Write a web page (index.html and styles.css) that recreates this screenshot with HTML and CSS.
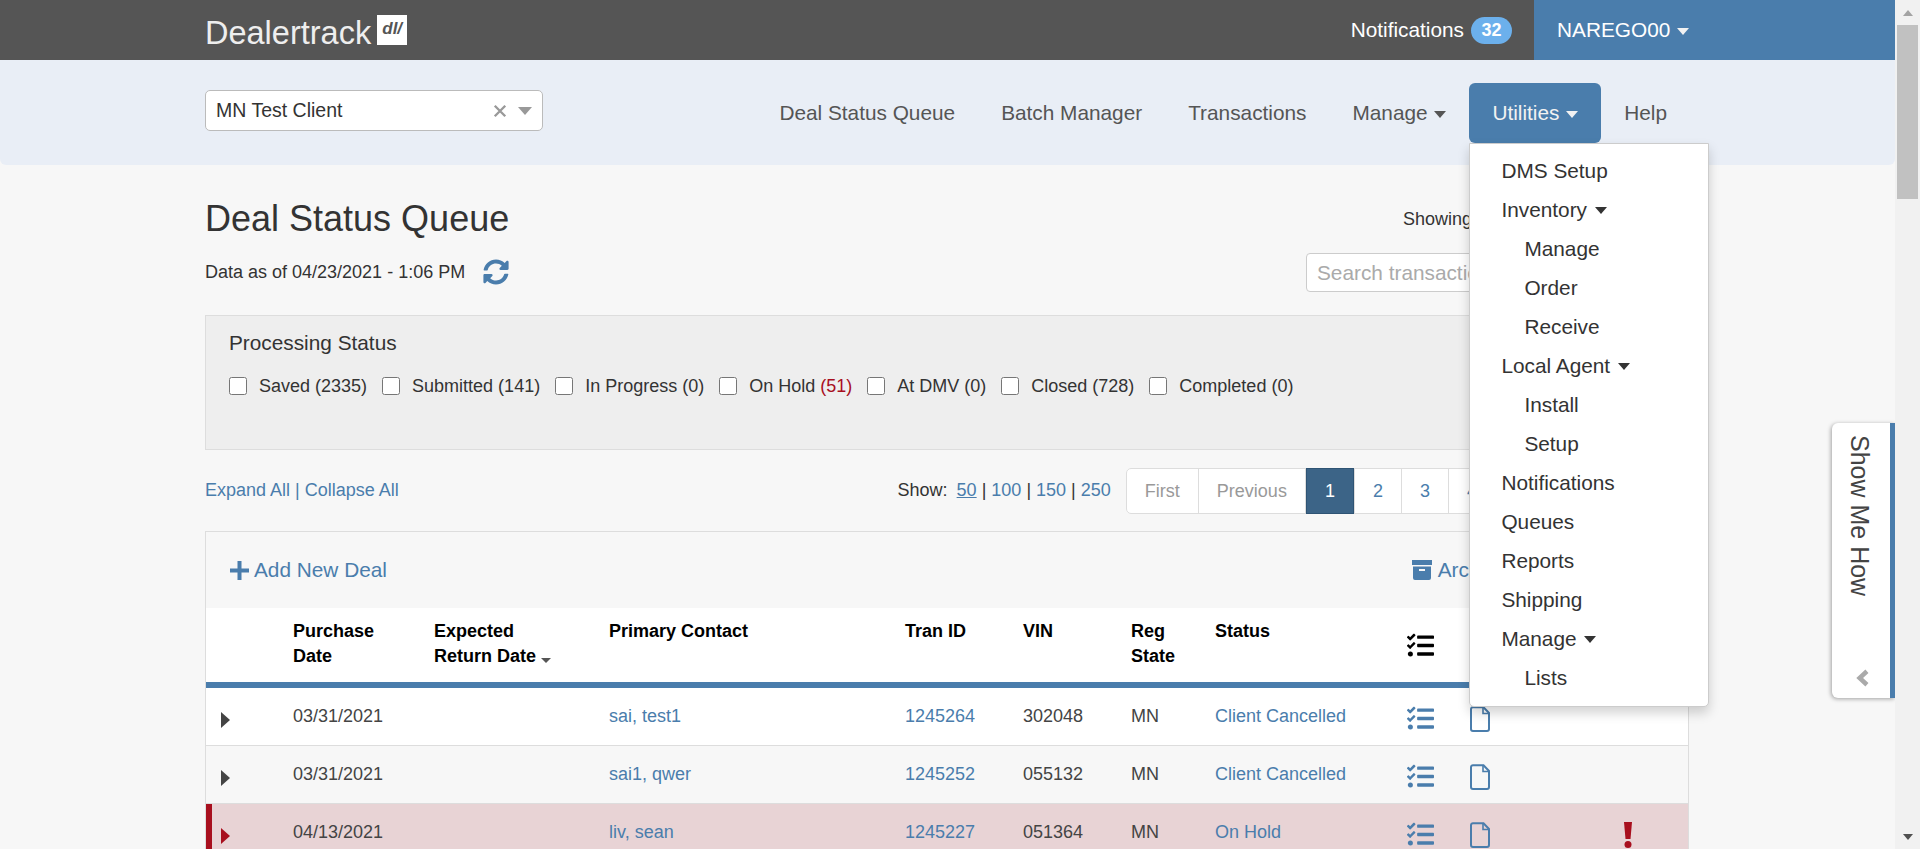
FILE: index.html
```
<!DOCTYPE html>
<html lang="en">
<head>
<meta charset="utf-8">
<title>Deal Status Queue</title>
<link rel="stylesheet" href="styles.css">
</head>
<body>
<svg class="sprite" aria-hidden="true">
  <symbol id="i-tasks" viewBox="0 0 512 512"><path d="M139.61 35.5a12 12 0 0 0-17 0L58.93 98.81l-22.7-22.12a12 12 0 0 0-17 0L3.53 92.41a12 12 0 0 0 0 17l47.59 47.4a12.78 12.78 0 0 0 17.61 0l15.59-15.62L156.52 69a12.09 12.09 0 0 0 .09-17zm0 159.19a12 12 0 0 0-17 0l-63.68 63.72-22.7-22.1a12 12 0 0 0-17 0L3.53 252a12 12 0 0 0 0 17L51 316.5a12.77 12.77 0 0 0 17.6 0l15.7-15.69 72.2-72.22a12 12 0 0 0 .09-16.9zM64 368c-26.49 0-48.59 21.5-48.59 48S37.53 464 64 464a48 48 0 0 0 0-96zm432 16H208a16 16 0 0 0-16 16v32a16 16 0 0 0 16 16h288a16 16 0 0 0 16-16v-32a16 16 0 0 0-16-16zm0-320H208a16 16 0 0 0-16 16v32a16 16 0 0 0 16 16h288a16 16 0 0 0 16-16V80a16 16 0 0 0-16-16zm0 160H208a16 16 0 0 0-16 16v32a16 16 0 0 0 16 16h288a16 16 0 0 0 16-16v-32a16 16 0 0 0-16-16z"/></symbol>
  <symbol id="i-doc" viewBox="0 0 20 26"><path d="M3 1.2h10.5L19 7v16a2 2 0 0 1-2 2H3a2 2 0 0 1-2-2V3.2a2 2 0 0 1 2-2z" fill="none" stroke="currentColor" stroke-width="2"/><path d="M13 1.5V7.5h5.7" fill="none" stroke="currentColor" stroke-width="1.6"/></symbol>
</svg>

<div class="app">
  <main class="page">
    <header class="topbar">
      <a class="logo">
        <span class="logo-text">Dealertrack</span>
        <span class="logo-mark">dl/</span>
      </a>
      <div class="notifications">
        <span>Notifications</span>
        <span class="badge">32</span>
      </div>
      <div class="user">NAREGO00 <i class="caret caret-light"></i></div>
    </header>

    <div class="navband">
      <div class="client-select">
        <span class="client-name">MN Test Client</span>
        <svg class="clear-x" viewBox="0 0 12 12"><path d="M1.5 1.5l9 9M10.500 1.500l-9 9"/></svg>
        <i class="select-caret"></i>
      </div>
      <nav class="mainnav">
        <a class="navitem">Deal Status Queue</a>
        <a class="navitem">Batch Manager</a>
        <a class="navitem">Transactions</a>
        <a class="navitem">Manage <i class="caret"></i></a>
        <div class="navitem active">Utilities <i class="caret caret-light"></i>
          <ul class="dropdown">
            <li>DMS Setup</li>
            <li>Inventory <i class="caret caret-dark"></i></li>
            <li class="sub">Manage</li>
            <li class="sub">Order</li>
            <li class="sub">Receive</li>
            <li>Local Agent <i class="caret caret-dark"></i></li>
            <li class="sub">Install</li>
            <li class="sub">Setup</li>
            <li>Notifications</li>
            <li>Queues</li>
            <li>Reports</li>
            <li>Shipping</li>
            <li>Manage <i class="caret caret-dark"></i></li>
            <li class="sub">Lists</li>
          </ul>
        </div>
        <a class="navitem">Help</a>
      </nav>
    </div>

    <div class="content">
      <section class="title-row">
        <div class="title-left">
          <h1>Deal Status Queue</h1>
          <div class="asof">
            <span>Data as of 04/23/2021 - 1:06 PM</span>
            <svg class="refresh" viewBox="0 0 512 512"><path d="M370.72 133.28C339.458 104.008 298.888 87.962 255.848 88c-77.458.068-144.328 53.178-162.791 126.85-1.344 5.363-6.122 9.15-11.651 9.15H24.103c-7.498 0-13.194-6.807-11.807-14.176C33.933 94.924 134.813 8 256 8c66.448 0 126.791 26.136 171.315 68.685L463.03 40.97C478.149 25.851 504 36.559 504 57.941V192c0 13.255-10.745 24-24 24H345.941c-21.382 0-32.09-25.851-16.971-40.971l41.75-41.749zM32 296h134.059c21.382 0 32.09 25.851 16.971 40.971l-41.75 41.75c31.262 29.273 71.835 45.319 114.876 45.28 77.418-.07 144.315-53.144 162.787-126.849 1.344-5.363 6.122-9.15 11.651-9.15h57.304c7.498 0 13.194 6.807 11.807 14.176C478.067 417.076 377.187 504 256 504c-66.448 0-126.791-26.136-171.315-68.685L48.97 471.03C33.851 486.149 8 475.441 8 454.059V320c0-13.255 10.745-24 24-24z"/></svg>
          </div>
        </div>
        <div class="title-right">
          <div class="showing">Showing</div>
          <input class="search" type="text" placeholder="Search transactions">
        </div>
      </section>

      <section class="status-panel">
        <h2>Processing Status</h2>
        <div class="status-options">
          <label class="opt"><input type="checkbox"><span>Saved (2335)</span></label>
          <label class="opt"><input type="checkbox"><span>Submitted (141)</span></label>
          <label class="opt"><input type="checkbox"><span>In Progress (0)</span></label>
          <label class="opt"><input type="checkbox"><span>On Hold <em class="count-red">(51)</em></span></label>
          <label class="opt"><input type="checkbox"><span>At DMV (0)</span></label>
          <label class="opt"><input type="checkbox"><span>Closed (728)</span></label>
          <label class="opt"><input type="checkbox"><span>Completed (0)</span></label>
        </div>
      </section>

      <div class="pager-row">
        <div class="expand"><a>Expand All</a> | <a>Collapse All</a></div>
        <div class="show">Show: <a class="current">50</a> | <a>100</a> | <a>150</a> | <a>250</a></div>
        <ul class="pagination">
          <li class="off">First</li>
          <li class="off">Previous</li>
          <li class="on">1</li>
          <li>2</li>
          <li>3</li>
          <li>4</li>
          <li>5</li>
          <li>Next</li>
          <li>Last</li>
        </ul>
      </div>

      <section class="deals">
        <div class="deals-bar">
          <a class="add-deal">
            <svg class="plus" viewBox="0 0 19 19"><path d="M7.500 0h4v7.500H19v4h-7.500V19h-4v-7.500H0v-4h7.500z"/></svg>
            Add New Deal
          </a>
          <a class="archive">
            <svg class="archive-icon" viewBox="0 0 20 20"><path d="M0 0h20v5H0zM1 6.500h18V18a2 2 0 0 1-2 2H3a2 2 0 0 1-2-2zM7 9v2h6V9z" fill-rule="evenodd"/></svg>
            Archive
          </a>
        </div>
        <table class="deal-table">
          <colgroup>
            <col class="c-arrow"><col class="c-date"><col class="c-return"><col class="c-contact"><col class="c-tran"><col class="c-vin"><col class="c-reg"><col class="c-status"><col class="c-tasks"><col class="c-doc"><col class="c-flag">
          </colgroup>
          <thead>
            <tr>
              <th></th>
              <th>Purchase<br>Date</th>
              <th>Expected<br>Return Date <i class="caret caret-sort"></i></th>
              <th>Primary Contact</th>
              <th>Tran ID</th>
              <th>VIN</th>
              <th>Reg<br>State</th>
              <th>Status</th>
              <th><svg class="icon-tasks head-icon"><use href="#i-tasks"/></svg></th>
              <th><span class="head-doc"></span></th>
              <th></th>
            </tr>
          </thead>
          <tbody>
            <tr class="row-white">
              <td class="arrow-cell"><i class="arrow"></i></td>
              <td>03/31/2021</td><td></td><td><a>sai, test1</a></td><td><a>1245264</a></td><td>302048</td><td>MN</td><td><a>Client Cancelled</a></td>
              <td><svg class="icon-tasks"><use href="#i-tasks"/></svg></td>
              <td><svg class="icon-doc"><use href="#i-doc"/></svg></td>
              <td></td>
            </tr>
            <tr class="row-grey">
              <td class="arrow-cell"><i class="arrow"></i></td>
              <td>03/31/2021</td><td></td><td><a>sai1, qwer</a></td><td><a>1245252</a></td><td>055132</td><td>MN</td><td><a>Client Cancelled</a></td>
              <td><svg class="icon-tasks"><use href="#i-tasks"/></svg></td>
              <td><svg class="icon-doc"><use href="#i-doc"/></svg></td>
              <td></td>
            </tr>
            <tr class="row-hold">
              <td class="arrow-cell"><i class="arrow"></i></td>
              <td>04/13/2021</td><td></td><td><a>liv, sean</a></td><td><a>1245227</a></td><td>051364</td><td>MN</td><td><a>On Hold</a></td>
              <td><svg class="icon-tasks"><use href="#i-tasks"/></svg></td>
              <td><svg class="icon-doc"><use href="#i-doc"/></svg></td>
              <td><svg class="flag" viewBox="0 0 10 26"><path d="M1 0h8l-1.500 17h-5z"/><circle cx="5" cy="22.500" r="3.500"/></svg></td>
            </tr>
          </tbody>
        </table>
      </section>
    </div>

    <aside class="showme">
      <span class="showme-text">Show Me How</span>
      <svg class="showme-chev" viewBox="0 0 12 16"><path d="M9.500 2L3 8l6.500 6" /></svg>
    </aside>
  </main>

  <div class="scrollbar">
    <div class="sb-btn"><i class="sb-up"></i></div>
    <div class="sb-thumb"></div>
    <div class="sb-btn sb-btn-down"><i class="sb-down"></i></div>
  </div>
</div>
</body>
</html>
```

FILE: styles.css
```
* { box-sizing: border-box; }
html, body { margin: 0; padding: 0; height: 100%; overflow: hidden; }
body { font-family: "Liberation Sans", Arial, sans-serif; font-size: 18px; color: #333; background: #f7f7f7; }
a { color: #4a7dac; text-decoration: none; }
ul { list-style: none; margin: 0; padding: 0; }
.sprite { display: none; }

.app { display: flex; height: 849px; }
.page { position: relative; flex: 1 1 auto; width: 1895px; height: 849px; overflow: hidden; background: #f7f7f7; }

/* Scrollbar */
.scrollbar { flex: 0 0 25px; display: flex; flex-direction: column; background: #f1f1f1; }
.sb-btn { height: 25px; display: flex; align-items: center; justify-content: center; }
.sb-btn-down { margin-top: auto; }
.sb-thumb { height: 174px; margin: 0 2px; background: #c1c1c1; }
.sb-up { width: 0; height: 0; border-left: 5.5px solid transparent; border-right: 5.5px solid transparent; border-bottom: 6px solid #a3a3a3; }
.sb-down { width: 0; height: 0; border-left: 5.5px solid transparent; border-right: 5.5px solid transparent; border-top: 6px solid #505050; }

/* Carets */
.caret { display: inline-block; width: 0; height: 0; margin-left: 1px; vertical-align: 2px; border-left: 6px solid transparent; border-right: 6px solid transparent; border-top: 7px solid #555; }
.caret-light { border-top-color: #f2f2f2; }
.caret-dark { border-top-color: #333; margin-left: 2px; vertical-align: 3px; }
.caret-sort { margin-left: 0; vertical-align: -1px; border-left-width: 5px; border-right-width: 5px; border-top-width: 5px; }

/* Top bar */
.topbar { display: flex; align-items: center; height: 60px; padding-left: 205px; background: #555; color: #fff; font-size: 20.8px; }
.logo { display: flex; align-items: flex-start; height: 30px; }
.logo-text { font-size: 32.5px; line-height: 30px; margin-top: 3px; color: #eee; }
.logo-mark { width: 30px; height: 30px; margin-left: 6px; background: #fff; color: #555; font-size: 17px; font-weight: bold; font-style: italic; line-height: 28px; text-align: center; }
.notifications { display: flex; align-items: center; gap: 7px; margin-left: auto; margin-right: 22px; }
.badge { width: 41px; height: 27px; border-radius: 14px; background: #6cb0ec; font-size: 18px; font-weight: bold; line-height: 27px; text-align: center; }
.user { width: 361px; height: 60px; padding-left: 23px; line-height: 60px; background: #4a7dac; }

/* Nav band */
.navband { display: flex; justify-content: space-between; height: 105px; padding: 0 205px; background: #e9eef6; border-radius: 0 0 6px 6px; position: relative; z-index: 2; }
.client-select { display: flex; align-items: center; width: 338px; height: 41px; margin-top: 30px; padding: 0 10px; background: #fff; border: 1px solid #bbb; border-radius: 5px; }
.client-name { flex: 1; font-size: 19.5px; }
.clear-x { width: 14px; height: 14px; fill: none; stroke: #999; stroke-width: 2; margin-right: 11px; }
.select-caret { width: 0; height: 0; border-left: 7.5px solid transparent; border-right: 7.5px solid transparent; border-top: 8px solid #999; }
.mainnav { display: flex; align-items: flex-start; margin-top: 23px; font-size: 20.8px; }
.navitem { position: relative; height: 60px; padding: 0 23px; line-height: 60px; color: #555; white-space: nowrap; }
.navitem.active { background: #4a7dac; border-radius: 6px; color: #f2f2f2; }
.dropdown { position: absolute; top: 60px; left: 0; width: 240px; padding: 7px 0 9px; background: #fff; border: 1px solid #ccc; border-radius: 0 0 5px 5px; box-shadow: 0 6px 12px rgba(0,0,0,.175); line-height: 39px; color: #333; z-index: 5; }
.dropdown li { padding-left: 31px; }
.dropdown li.sub { padding-left: 54px; }

/* Content */
.content { width: 1689px; padding-left: 205px; }
.title-row { display: flex; justify-content: space-between; height: 150px; padding-top: 34px; }
h1 { margin: 0; font-size: 36px; font-weight: normal; line-height: 40px; color: #333; }
.asof { display: flex; align-items: center; gap: 18px; margin-top: 20px; height: 26px; }
.refresh { width: 26px; height: 26px; fill: #4a7dac; }
.title-right { width: 383px; }
.showing { height: 40px; padding-left: 97px; line-height: 40px; }
.search { display: block; width: 100%; height: 39px; margin-top: 14px; padding: 0 10px; border: 1px solid #ccc; border-radius: 4px; background: #fff; font: 20.8px "Liberation Sans", Arial, sans-serif; }
.search::placeholder { color: #aaa; }

.status-panel { height: 135px; padding: 14px 23px 0; background: #eee; border: 1px solid #ddd; }
h2 { margin: 0; font-size: 20.8px; font-weight: normal; line-height: 26px; color: #333; }
.status-options { display: flex; gap: 15px; height: 28px; margin-top: 16px; }
.opt { display: flex; align-items: center; gap: 12px; }
.opt input { width: 18px; height: 18px; margin: 0; }
.count-red { font-style: normal; color: #a80f1e; }

.pager-row { display: flex; align-items: center; height: 81px; padding-right: 1px; }
.expand { font-size: 18px; color: #4a7dac; }
.show { margin-left: auto; white-space: pre-wrap; color: #333; }
.show a.current { text-decoration: underline; margin-left: 4px; }
.pagination { display: flex; height: 46px; margin-left: 15px; background: #fff; border-radius: 5px; }
.pagination li { margin-left: -1px; padding: 0 18px; line-height: 44px; color: #4a7dac; border: 1px solid #ddd; background: #fff; }
.pagination li:first-child { margin-left: 0; border-radius: 5px 0 0 5px; }
.pagination li.off { color: #999; }
.pagination li.on { margin-left: 0; margin-right: 1px; color: #fff; background: #3c6487; border-color: #2f5474; }

.deals { border: solid #ddd; border-width: 1px 1px 0; }
.deals-bar { display: flex; align-items: center; height: 76px; padding: 0 181px 0 24px; font-size: 20.8px; }
.add-deal { display: flex; align-items: center; gap: 5px; }
.plus { width: 19px; height: 19px; fill: #4a7dac; }
.archive { display: flex; align-items: center; gap: 6px; margin-left: auto; }
.archive-icon { width: 20px; height: 20px; fill: #4a7dac; }

.deal-table { width: 100%; table-layout: fixed; border-collapse: separate; border-spacing: 0; }
.c-arrow { width: 87px; } .c-date { width: 141px; } .c-return { width: 175px; } .c-contact { width: 296px; }
.c-tran { width: 118px; } .c-vin { width: 108px; } .c-reg { width: 84px; } .c-status { width: 192px; }
.c-tasks { width: 63px; } .c-doc { width: 149px; }
.deal-table th { height: 80px; padding: 11px 0 0; vertical-align: top; text-align: left; font-size: 18px; line-height: 25px; font-weight: bold; color: #000; background: #fff; border-bottom: 6px solid #4a7dac; }
.deal-table td { height: 58px; padding: 0; vertical-align: middle; color: #444; border-bottom: 1px solid #ddd; }
.row-white td { background: #fff; }
.row-grey td { background: #f7f7f7; }
.row-hold td { background: #e8d3d5; }
.deal-table td.arrow-cell { padding-left: 15px; }
.row-hold .arrow-cell { box-shadow: inset 6px 0 0 #a80f1e; }
.arrow { display: block; width: 0; height: 0; margin-top: 6px; border-top: 8px solid transparent; border-bottom: 8px solid transparent; border-left: 9px solid #444; }
.row-hold .arrow { border-left-color: #a80f1e; }
.icon-tasks { display: block; width: 27px; height: 27px; margin-top: 4px; fill: #4a7dac; }
.head-icon { margin-top: 13px; fill: #000; }
.icon-doc { display: block; width: 20px; height: 26px; margin-top: 4px; color: #4a7dac; }
.head-doc { display: block; width: 20px; height: 25px; margin-top: 14px; background: #7b3000; }
.flag { display: block; width: 10px; height: 26px; margin: 4px 0 0 4px; fill: #a80f1e; }

/* Show Me How */
.showme { position: absolute; top: 423px; right: 0; display: flex; flex-direction: column; align-items: center; justify-content: space-between; width: 63px; height: 275px; padding: 12px 2px 8px 0; background: #fff; border-right: 5px solid #4a7dac; border-radius: 6px 0 0 6px; box-shadow: -1px 1px 4px rgba(0,0,0,.35); z-index: 3; }
.showme-text { writing-mode: vertical-rl; font-size: 25px; line-height: 30px; color: #444; }
.showme-chev { width: 14px; height: 18px; margin: 0 0 3px 6px; fill: none; stroke: #aaa; stroke-width: 4; }
```
